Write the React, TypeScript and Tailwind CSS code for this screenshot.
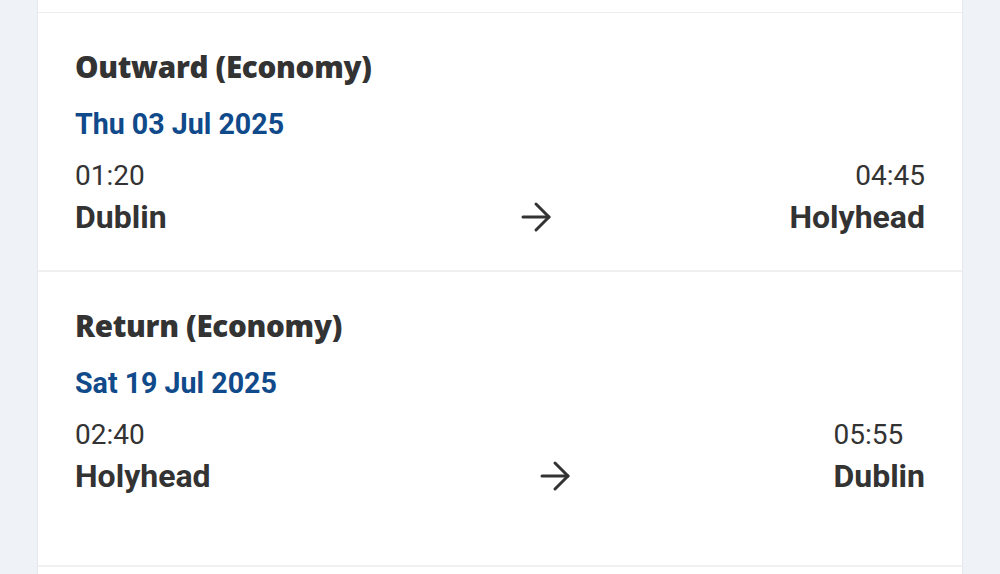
type Leg = {
  title: string;
  date: string;
  departTime: string;
  departCity: string;
  arriveTime: string;
  arriveCity: string;
  arrowSlot: string;
  arriveAlign: string;
  height: string;
};

function ArrowIcon() {
  return (
    <svg width="32" height="32" viewBox="0 0 32 32" fill="none" stroke="#333" strokeWidth="3" strokeLinecap="round" strokeLinejoin="round">
      <path d="M3 16h26" />
      <path d="M16 3l13 13-13 13" />
    </svg>
  );
}

function LegSection({ leg }: { leg: Leg }) {
  return (
    <section className={`${leg.height} border-b-2 border-[#eef0f2] px-[37px] pt-[34px]`}>
      <h2 className="font-['Open_Sans',sans-serif] text-[29.6px] leading-[40px] font-extrabold tracking-[-0.3px] text-[#333]">
        {leg.title}
      </h2>
      <div className="mt-[19px] font-['Roboto',sans-serif] text-[28.6px] leading-[36px] font-bold text-[#104a8a]">
        {leg.date}
      </div>
      <div className="mt-[16px] flex items-end font-['Roboto',sans-serif] text-[#333]">
        <div className={`${leg.arrowSlot} flex flex-col`}>
          <span className="text-[28px] leading-[36px]">{leg.departTime}</span>
          <span className="mt-[2px] text-[32px] leading-[42px] font-bold">{leg.departCity}</span>
        </div>
        <div className="flex h-[42px] items-center">
          <ArrowIcon />
        </div>
        <div className={`ml-auto flex flex-col ${leg.arriveAlign}`}>
          <span className="text-[28px] leading-[36px]">{leg.arriveTime}</span>
          <span className="mt-[2px] text-[32px] leading-[42px] font-bold">{leg.arriveCity}</span>
        </div>
      </div>
    </section>
  );
}

export default function App() {
  const legs: Leg[] = [
    {
      title: "Outward (Economy)",
      date: "Thu 03 Jul 2025",
      departTime: "01:20",
      departCity: "Dublin",
      arriveTime: "04:45",
      arriveCity: "Holyhead",
      arrowSlot: "w-[445px]",
      arriveAlign: "items-end",
      height: "h-[259px]",
    },
    {
      title: "Return (Economy)",
      date: "Sat 19 Jul 2025",
      departTime: "02:40",
      departCity: "Holyhead",
      arriveTime: "05:55",
      arriveCity: "Dublin",
      arrowSlot: "w-[464px]",
      arriveAlign: "items-start",
      height: "h-[295px]",
    },
  ];

  return (
    <div className="h-[574px] w-full overflow-hidden bg-[#eff3f8]">
      <div className="ml-[37px] h-full w-[926px] border-x border-[#e3e8ee] bg-white">
        <div className="h-[13px] border-b border-[#eceef0]" />
        {legs.map((leg, index) => (
          <LegSection key={index} leg={leg} />
        ))}
      </div>
    </div>
  );
}
